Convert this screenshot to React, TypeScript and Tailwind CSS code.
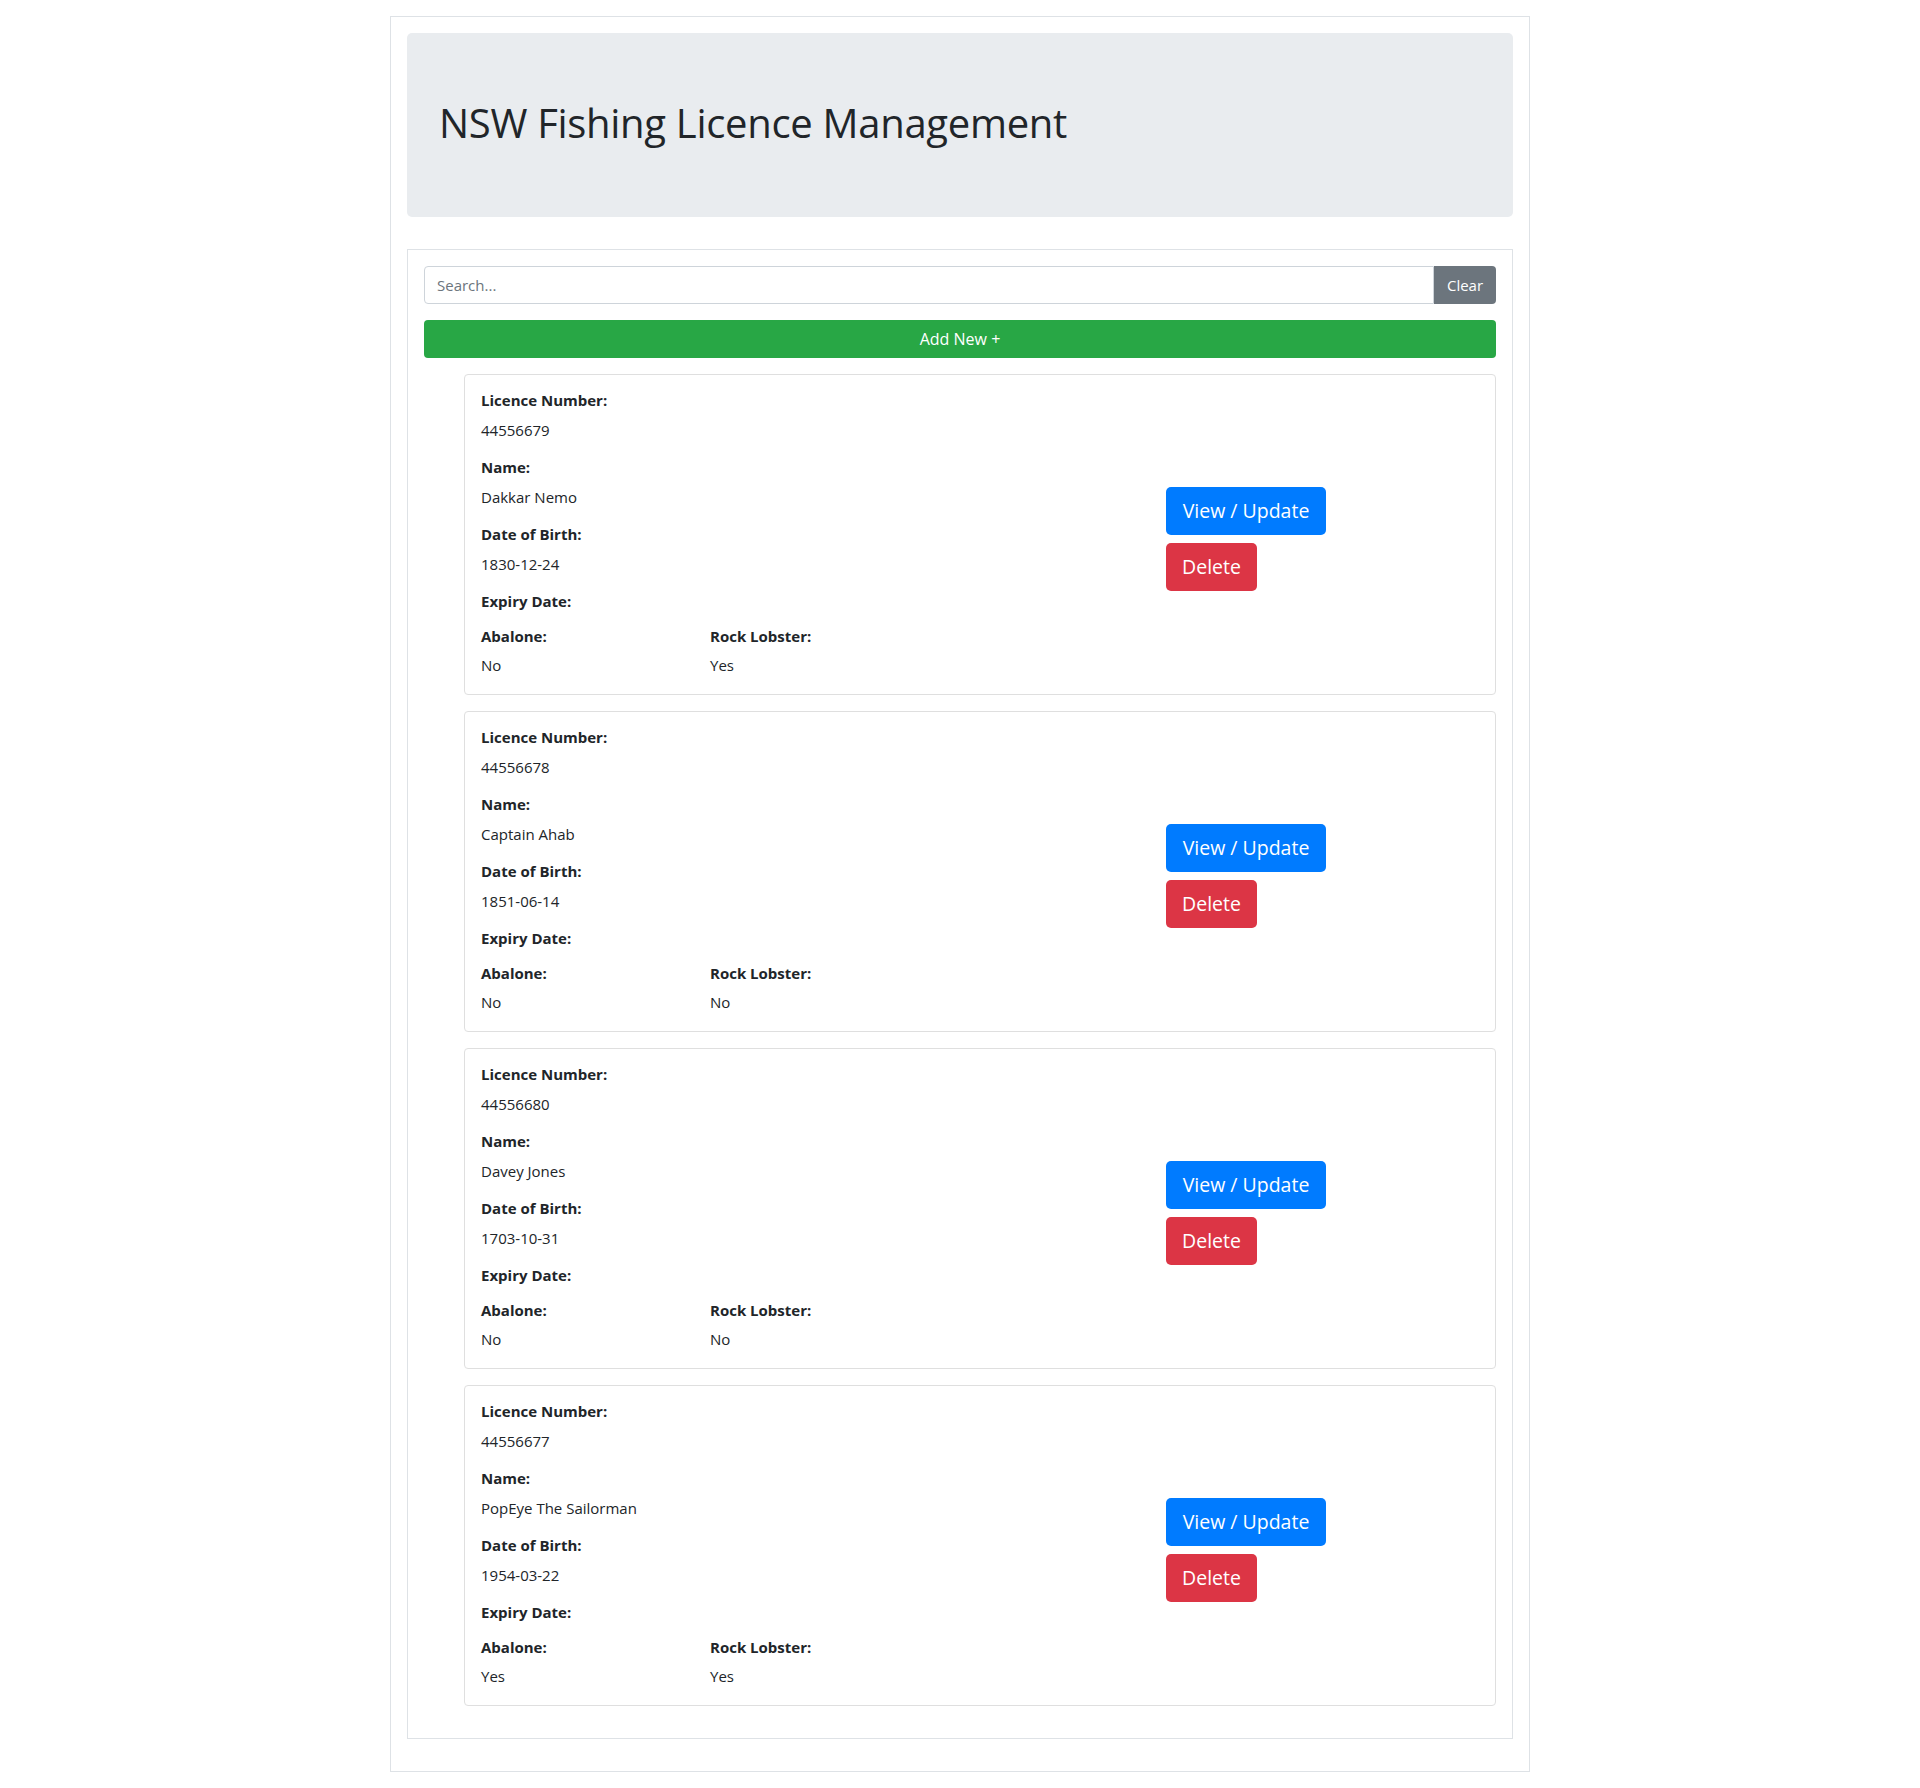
import React from "react";

type Licence = {
  number: string;
  name: string;
  dob: string;
  abalone: string;
  lobster: string;
};

const licences: Licence[] = [
  { number: "44556679", name: "Dakkar Nemo", dob: "1830-12-24", abalone: "No", lobster: "Yes" },
  { number: "44556678", name: "Captain Ahab", dob: "1851-06-14", abalone: "No", lobster: "No" },
  { number: "44556680", name: "Davey Jones", dob: "1703-10-31", abalone: "No", lobster: "No" },
  { number: "44556677", name: "PopEye The Sailorman", dob: "1954-03-22", abalone: "Yes", lobster: "Yes" },
];

function LicenceCard({ l }: { l: Licence }) {
  return (
    <div className="ml-[40px] mb-[16px] h-[321px] rounded-[4px] border border-[#dfdfdf] bg-white pl-[16px] pt-[13px] pb-[16px] flex text-[15px]">
      <div className="w-[685px] shrink-0">
        <div className="font-bold h-[24px] leading-[24px] mb-[6px]">Licence Number:</div>
        <div className="h-[24px] leading-[24px] mb-[13px]">{l.number}</div>
        <div className="font-bold h-[24px] leading-[24px] mb-[6px]">Name:</div>
        <div className="h-[24px] leading-[24px] mb-[13px]">{l.name}</div>
        <div className="font-bold h-[24px] leading-[24px] mb-[6px]">Date of Birth:</div>
        <div className="h-[24px] leading-[24px] mb-[13px]">{l.dob}</div>
        <div className="font-bold h-[24px] leading-[24px] mb-[11px]">Expiry Date:</div>
        <div className="grid grid-cols-[229px_1fr]">
          <div>
            <div className="font-bold h-[24px] leading-[24px] mb-[5px]">Abalone:</div>
            <div className="h-[24px] leading-[24px]">{l.abalone}</div>
          </div>
          <div>
            <div className="font-bold h-[24px] leading-[24px] mb-[5px]">Rock Lobster:</div>
            <div className="h-[24px] leading-[24px]">{l.lobster}</div>
          </div>
        </div>
      </div>
      <div className="flex flex-col items-start gap-[8px] pt-[99px]">
        <button className="h-[48px] w-[160px] rounded-[5px] bg-[#007bff] text-white text-[19.5px] leading-[30px]">
          View / Update
        </button>
        <button className="h-[48px] w-[91px] rounded-[5px] bg-[#dc3545] text-white text-[19.5px] leading-[30px]">
          Delete
        </button>
      </div>
    </div>
  );
}

export default function App() {
  return (
    <div
      className="min-h-screen bg-white text-[#212529] text-[16px] pt-[16px] pb-[16px]"
      style={{ fontFamily: '"Open Sans", "Noto Sans", sans-serif' }}
    >
      <div className="mx-auto w-[1140px] border border-[#dee2e6] px-[16px] pt-[16px] pb-[32px]">
        <div className="h-[184px] rounded-[5px] bg-[#e9ecef] pl-[32px] pt-[66px]">
          <h1 className="text-[40px] leading-[48px] font-medium tracking-[-0.3px]">
            NSW Fishing Licence Management
          </h1>
        </div>
        <div className="mt-[32px] border border-[#dee2e6] px-[16px] pt-[16px] pb-[16px]">
          <div className="flex h-[38px] text-[15px]">
            <div className="flex-1 flex items-center rounded-l-[4px] border border-[#ced4da] pl-[12px] text-[#6c757d]">
              Search...
            </div>
            <button className="w-[62px] rounded-r-[4px] bg-[#6c757d] text-white">Clear</button>
          </div>
          <button className="mt-[16px] mb-[16px] h-[38px] w-full rounded-[4px] bg-[#28a745] text-white">
            Add New +
          </button>
          {licences.map((l) => (
            <LicenceCard key={l.number} l={l} />
          ))}
        </div>
      </div>
    </div>
  );
}
